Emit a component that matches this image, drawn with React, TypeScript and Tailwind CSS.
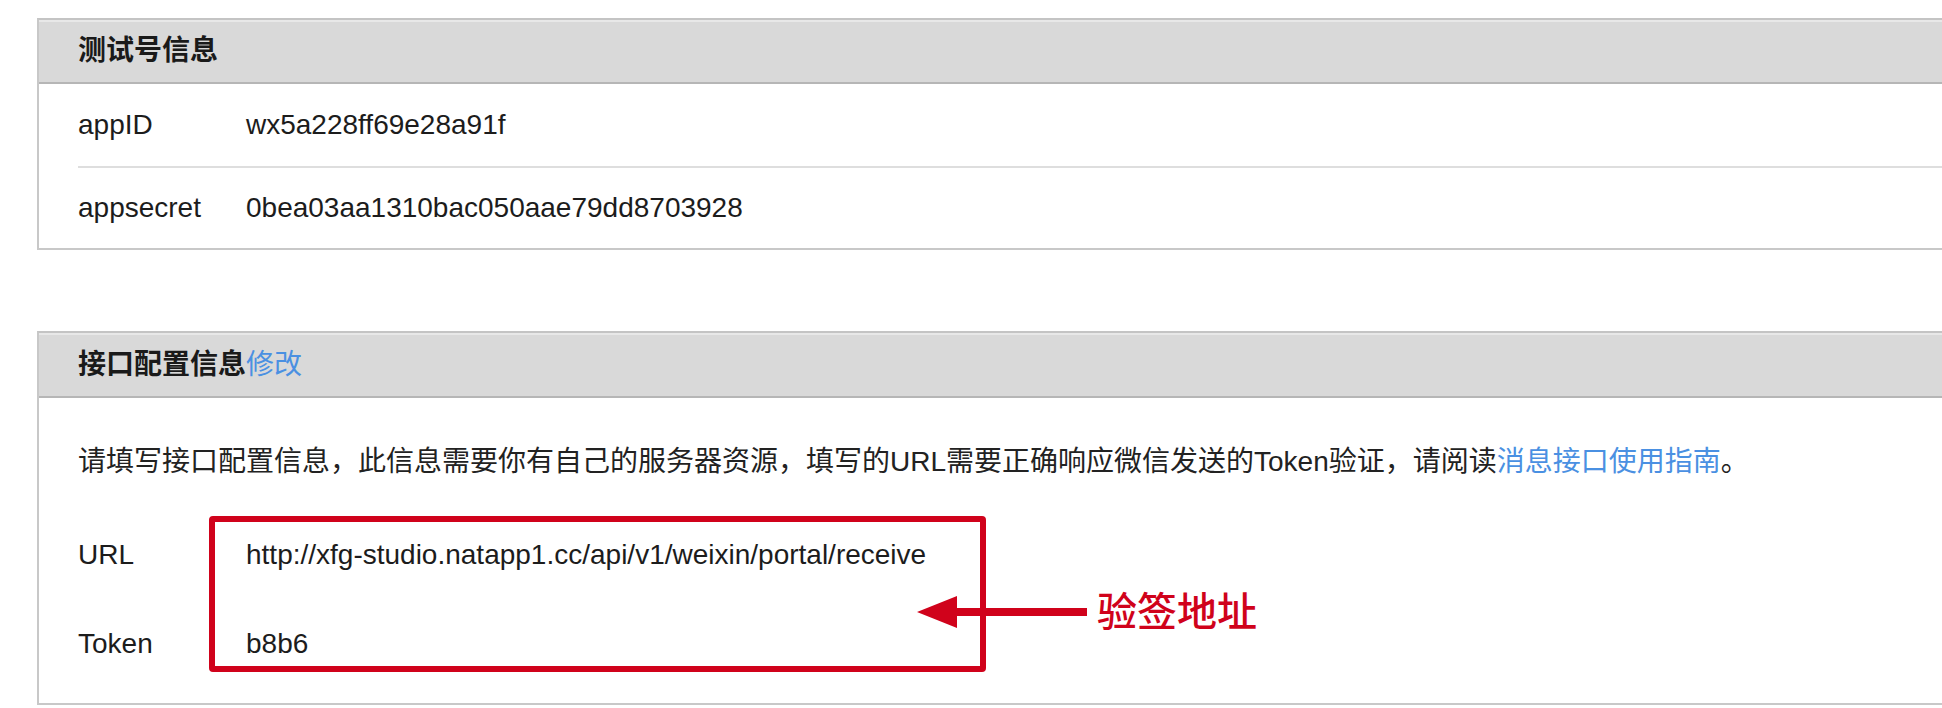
const font = "font-['Liberation_Sans','Noto_Sans_CJK_SC',sans-serif]"

function Row({ label, value, divider }: { label: string; value: string; divider?: boolean }) {
  return (
    <div
      className={
        divider
          ? 'ml-[39px] h-[84px] flex items-center border-b-2 border-[#dedede]'
          : 'ml-[39px] h-[80px] flex items-center'
      }
    >
      <div className="w-[168px] shrink-0">{label}</div>
      <div>{value}</div>
    </div>
  )
}

export default function App() {
  return (
    <div className={`${font} w-[1942px] h-[708px] overflow-hidden bg-white pl-[37px] pt-[18px] text-[28px] text-[#1c1c1c]`}>
      {/* 测试号信息 */}
      <div className="border-2 border-r-0 border-[#c8c8c8] border-t-[#c4c4c4]">
        <div className="h-[64px] flex items-center pl-[39px] bg-[#d9d9d9] border-b-2 border-[#b6b6b6] shadow-[inset_0_2px_0_#e8e8e8] font-bold text-[#1a1a1a]">
          测试号信息
        </div>
        <Row label="appID" value="wx5a228ff69e28a91f" divider />
        <Row label="appsecret" value="0bea03aa1310bac050aae79dd8703928" />
      </div>

      {/* 接口配置信息 */}
      <div className="mt-[81px] border-2 border-r-0 border-[#c8c8c8] border-t-[#c4c4c4]">
        <div className="h-[65px] flex items-center pl-[39px] bg-[#d9d9d9] border-b-2 border-[#b6b6b6] shadow-[inset_0_2px_0_#e8e8e8]">
          <span className="font-bold text-[#1a1a1a]">接口配置信息</span>
          <span className="text-[#4a90e2]">修改</span>
        </div>
        <div className="pl-[39px] pt-[44px] pb-[15px]">
          <p className="leading-[40px] text-[#222]">
            请填写接口配置信息，此信息需要你有自己的服务器资源，填写的URL需要正确响应微信发送的Token验证，请阅读
            <span className="text-[#4a90e2]">消息接口使用指南</span>。
          </p>
          <div className="relative mt-[28px]">
            <div className="h-[89px] flex items-center">
              <div className="w-[168px] shrink-0">URL</div>
              <div>http://xfg-studio.natapp1.cc/api/v1/weixin/portal/receive</div>
            </div>
            <div className="h-[89px] flex items-center">
              <div className="w-[168px] shrink-0">Token</div>
              <div>b8b6</div>
            </div>

            {/* annotation */}
            <div className="absolute left-[131px] top-[6px] w-[777px] h-[156px] border-[6px] border-[#d0021b] rounded-[4px]" />
            <svg className="absolute left-[839px] top-[85px]" width="170" height="34" viewBox="0 0 170 34">
              <polygon points="0,17 40,1 40,33" fill="#d0021b" />
              <rect x="38" y="13" width="132" height="8" fill="#d0021b" />
            </svg>
            <div className="absolute left-[1019px] top-[78px] text-[40px] leading-[48px] text-[#d0021b] font-medium">
              验签地址
            </div>
          </div>
        </div>
      </div>
    </div>
  )
}
